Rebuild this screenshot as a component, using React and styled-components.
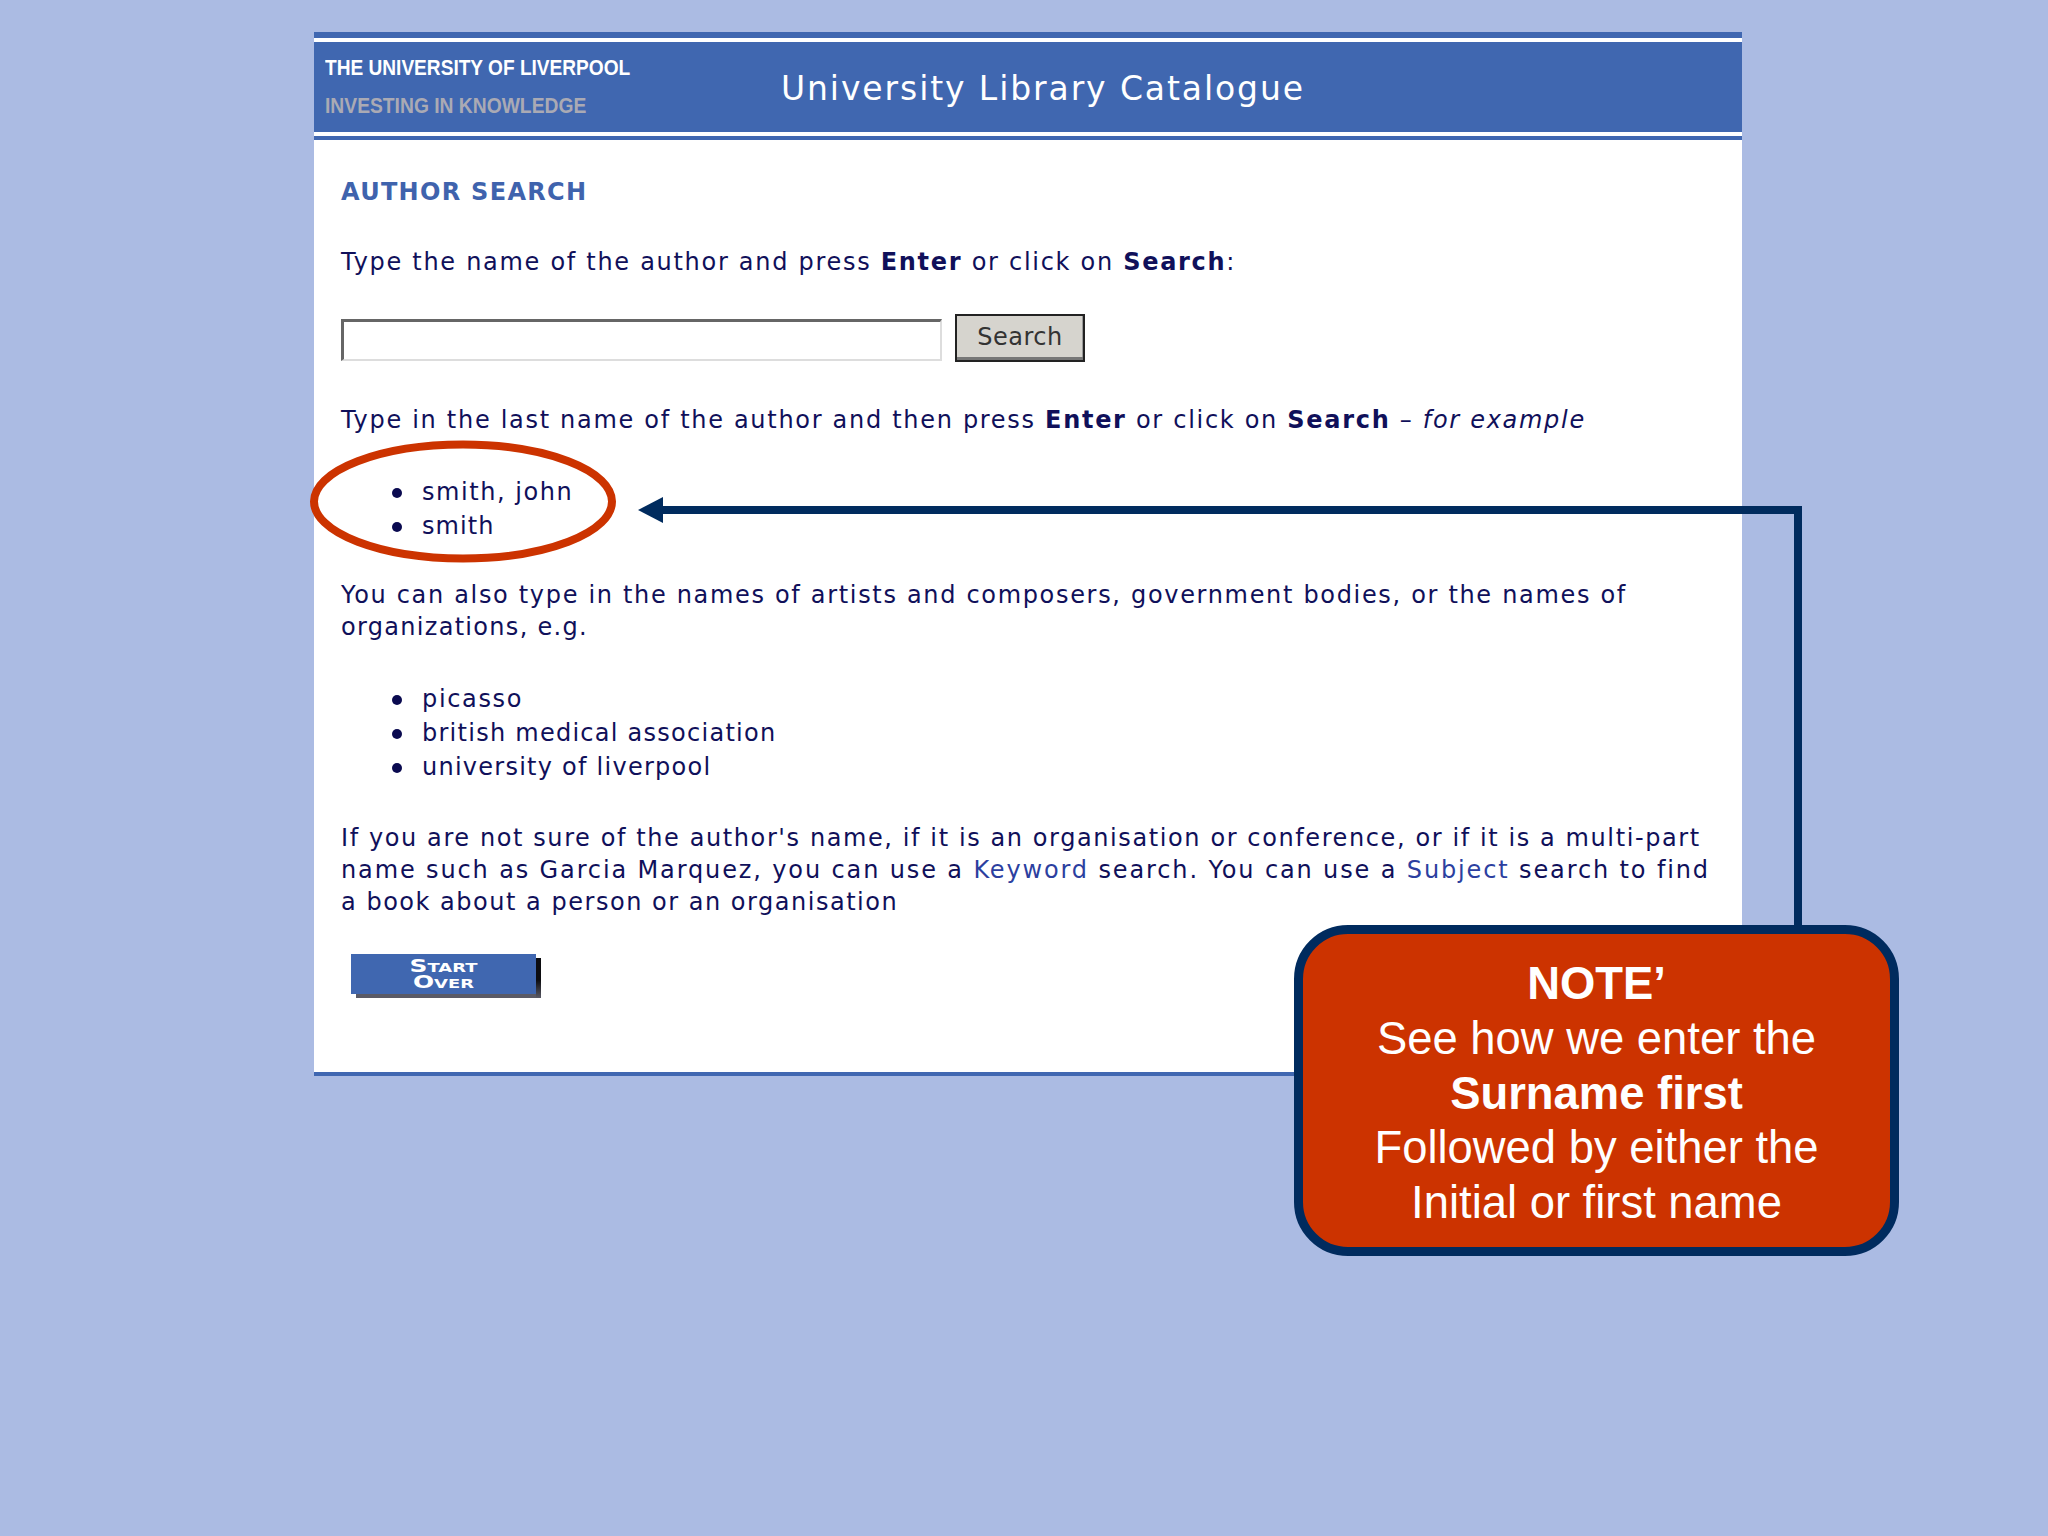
import React from "react";
import styled, { createGlobalStyle } from "styled-components";

const Global = createGlobalStyle`
  html, body { margin: 0; padding: 0; background: #abbbe3; }
  * { box-sizing: border-box; }
`;

const Slide = styled.div`
  position: relative;
  width: 2048px;
  height: 1536px;
  overflow: hidden;
  background: #abbbe3;
  padding: 32px 306px 0 314px;
`;

const Panel = styled.main`
  background: #fff;
  border-bottom: 4px solid #4067b1;
  font-family: "DejaVu Sans", Verdana, sans-serif;
  color: #10105a;
`;

const Masthead = styled.header`
  background: #fff;
  border-top: 6px solid #4067b1;
  border-bottom: 4px solid #4067b1;
  padding: 4px 0;
`;

const Banner = styled.div`
  display: flex;
  align-items: center;
  height: 90px;
  background: #4067b0;
`;

const Brand = styled.div`
  flex: 0 0 467px;
  padding-left: 11px;
  font-family: "Liberation Sans", sans-serif;
  font-weight: 700;
  font-size: 22px;
  line-height: 38px;
`;

const BrandLine = styled.div`
  color: ${(p) => (p.$muted ? "#aaaab4" : "#fff")};
  white-space: nowrap;
  transform: scaleX(${(p) => (p.$muted ? 0.876 : 0.868)});
  transform-origin: left center;
`;

const Title = styled.h1`
  margin: 0;
  padding-top: 2px;
  font-family: "DejaVu Sans", sans-serif;
  font-weight: 400;
  font-size: 33px;
  letter-spacing: 1.9px;
  color: #fff;
  white-space: nowrap;
`;

const Content = styled.section`
  padding: 36px 27px 78px;
`;

const Heading = styled.h2`
  margin: 0 0 38px;
  font-size: 24px;
  line-height: 32px;
  font-weight: 700;
  letter-spacing: 1.3px;
  color: #3f63ad;
`;

const Para = styled.p`
  margin: ${(p) => p.$top || 0}px 0 0;
  font-size: 24px;
  line-height: 32px;
  white-space: nowrap;
`;

const Line = styled.span`
  display: block;
  letter-spacing: ${(p) => p.$track}px;
`;

const SearchRow = styled.form`
  display: flex;
  align-items: center;
  gap: 13px;
  height: 48px;
  margin: 36px 0 0;
`;

const Field = styled.input`
  width: 601px;
  height: 42px;
  margin-top: 4px;
  padding: 0 4px;
  background: #fff;
  border-style: solid;
  border-width: 3px 2px 2px 3px;
  border-color: #666 #ddd #ddd #666;
  outline: none;
`;

const SearchButton = styled.button`
  width: 130px;
  height: 48px;
  padding: 0 0 2px;
  background: #d6d4ce;
  border: 2px solid #222;
  box-shadow: inset 0 -3px 0 #777, inset -1px 0 0 #999;
  font-family: "DejaVu Sans", sans-serif;
  font-size: 24px;
  letter-spacing: 0.5px;
  color: #333;
`;

const Bullets = styled.ul`
  margin: ${(p) => p.$top}px 0 0;
  padding: 0 0 0 81px;
  font-size: 24px;
  line-height: 34px;
  list-style: none;
`;

const Bullet = styled.li`
  position: relative;
  letter-spacing: ${(p) => p.$track}px;
  &::before {
    content: "";
    position: absolute;
    left: -30px;
    top: 13px;
    width: 10px;
    height: 10px;
    border-radius: 50%;
    background: #0a0a50;
  }
`;

const Link = styled.a`
  color: #2c3f9f;
  text-decoration: none;
`;

const StartOver = styled.button`
  position: relative;
  display: block;
  width: 185px;
  height: 40px;
  margin: 36px 0 0 10px;
  padding: 0 0 1px;
  background: #4067b0;
  border: none;
  box-shadow: 5px 4px 0 #5a5a66;
  color: #fff;
  font-family: "DejaVu Sans", sans-serif;
  font-weight: 700;
  font-size: 18px;
  line-height: 15.5px;
  font-variant: small-caps;
  &::after {
    content: "";
    position: absolute;
    left: 100%;
    top: 4px;
    bottom: -4px;
    width: 5px;
    background: linear-gradient(#0c0c10 55%, #5a5a66);
  }
`;

const StartWord = styled.span`
  display: block;
  transform: scaleX(1.38);
`;

const Annotation = styled.svg`
  position: absolute;
  inset: 0;
  width: 2048px;
  height: 1536px;
  pointer-events: none;
`;

const Note = styled.aside`
  position: absolute;
  left: 1294px;
  top: 925px;
  width: 605px;
  height: 331px;
  display: flex;
  flex-direction: column;
  justify-content: center;
  padding-top: 7px;
  background: #cc3300;
  border: 9px solid #002b5e;
  border-radius: 54px;
  font-family: "Liberation Sans", Arial, sans-serif;
  font-size: 45.4px;
  line-height: 54.7px;
  color: #fff;
  text-align: center;
`;

const NoteStrong = styled.strong`
  display: block;
  font-weight: 700;
`;

const NoteLine = styled.span`
  display: block;
`;

export default function App() {
  return (
    <Slide>
      <Global />
      <Panel>
        <Masthead>
          <Banner>
            <Brand>
              <BrandLine>THE UNIVERSITY OF LIVERPOOL</BrandLine>
              <BrandLine $muted>INVESTING IN KNOWLEDGE</BrandLine>
            </Brand>
            <Title>University Library Catalogue</Title>
          </Banner>
        </Masthead>
        <Content>
          <Heading>AUTHOR SEARCH</Heading>
          <Para>
            <Line $track={1.71}>
              Type the name of the author and press <b>Enter</b> or click on <b>Search</b>:
            </Line>
          </Para>
          <SearchRow>
            <Field type="text" />
            <SearchButton type="button">Search</SearchButton>
          </SearchRow>
          <Para $top={42}>
            <Line $track={1.7}>
              Type in the last name of the author and then press <b>Enter</b> or click on <b>Search</b> – <i>for example</i>
            </Line>
          </Para>
          <Bullets $top={39}>
            <Bullet $track={1.55}>smith, john</Bullet>
            <Bullet $track={1.1}>smith</Bullet>
          </Bullets>
          <Para $top={36}>
            <Line $track={1.68}>
              You can also type in the names of artists and composers, government bodies, or the names of
            </Line>
            <Line $track={1.3}>organizations, e.g.</Line>
          </Para>
          <Bullets $top={39}>
            <Bullet $track={1.65}>picasso</Bullet>
            <Bullet $track={1.26}>british medical association</Bullet>
            <Bullet $track={1.25}>university of liverpool</Bullet>
          </Bullets>
          <Para $top={38}>
            <Line $track={1.6}>
              If you are not sure of the author's name, if it is an organisation or conference, or if it is a multi-part
            </Line>
            <Line $track={1.87}>
              name such as Garcia Marquez, you can use a <Link>Keyword</Link> search. You can use a <Link>Subject</Link> search to find
            </Line>
            <Line $track={1.52}>a book about a person or an organisation</Line>
          </Para>
          <StartOver type="button">
            <StartWord>Start</StartWord>
            <StartWord>Over</StartWord>
          </StartOver>
        </Content>
      </Panel>
      <Annotation viewBox="0 0 2048 1536">
        <ellipse cx="463" cy="501.5" rx="149" ry="57" fill="none" stroke="#cc3300" strokeWidth="8" />
        <path d="M662 510H1798V930" fill="none" stroke="#002b5e" strokeWidth="8" />
        <path d="M638 510L663 497V523Z" fill="#002b5e" />
      </Annotation>
      <Note>
        <NoteStrong>NOTE’</NoteStrong>
        <NoteLine>See how we enter the</NoteLine>
        <NoteStrong>Surname first</NoteStrong>
        <NoteLine>Followed by either the</NoteLine>
        <NoteLine>Initial or first name</NoteLine>
      </Note>
    </Slide>
  );
}
